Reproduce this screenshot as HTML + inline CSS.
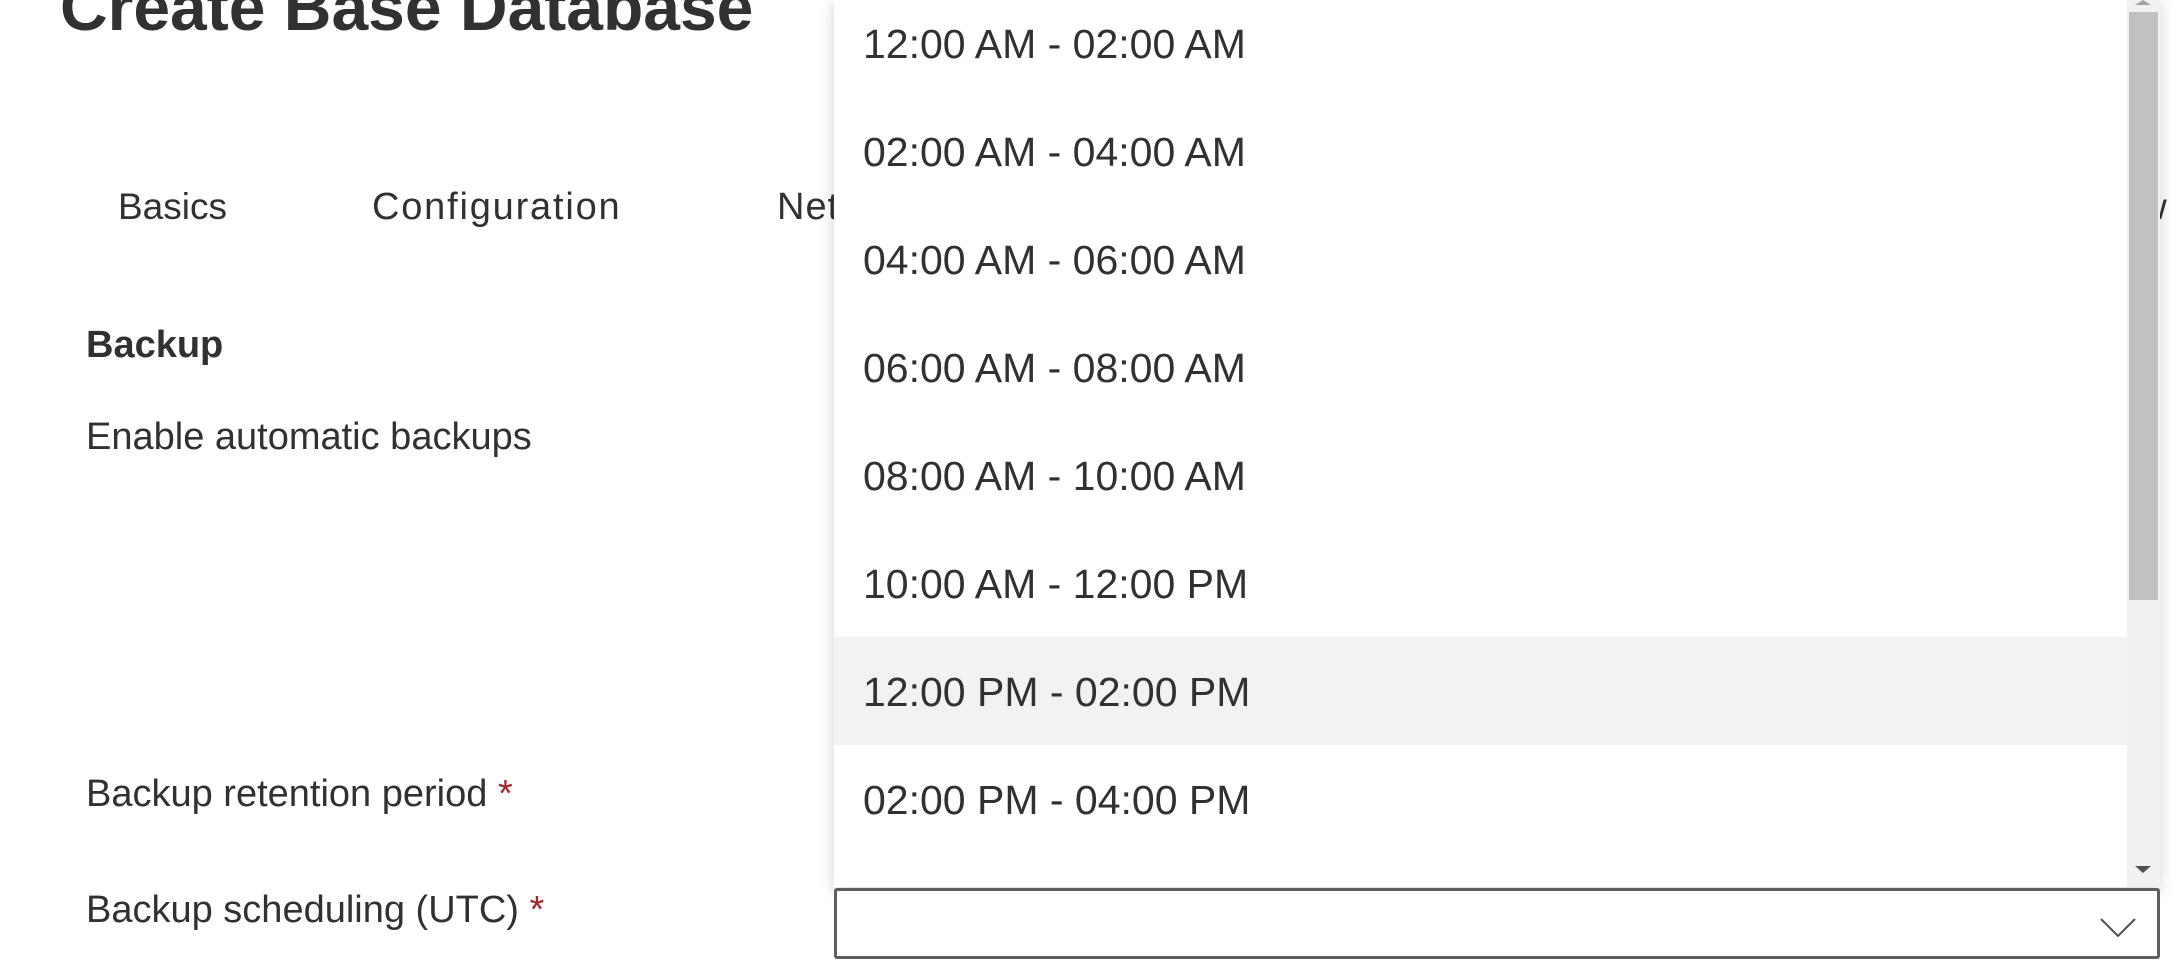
<!DOCTYPE html>
<html><head><style>
body{margin:0;width:2180px;height:979px;overflow:hidden;background:#fff;font-family:"Liberation Sans",sans-serif;color:#323130;position:relative}
.t{position:absolute;white-space:nowrap;line-height:1}
.item{position:absolute;left:834px;width:1293px;height:108px}
.item span{position:absolute;left:29px;top:32px;font-size:41px}
.star{color:#a4262c}
</style></head><body>
<div class="t" style="left:60px;top:-26px;font-size:66px;font-weight:bold">Create Base Database</div>
<div class="t" style="left:118px;top:188px;font-size:37px">Basics</div>
<div class="t" style="left:372px;top:188px;font-size:38px;letter-spacing:1.8px">Configuration</div>
<div class="t" style="left:777px;top:188px;font-size:38px;letter-spacing:1px">Networking</div>
<div class="t" style="left:2140px;top:188px;font-size:37px">w</div>
<div class="t" style="left:86px;top:326px;font-size:38px;font-weight:bold">Backup</div>
<div class="t" style="left:86px;top:418px;font-size:38px">Enable automatic backups</div>
<div class="t" style="left:86px;top:775px;font-size:38px">Backup retention period <span class="star">*</span></div>
<div class="t" style="left:86px;top:891px;font-size:38px">Backup scheduling (UTC) <span class="star">*</span></div>

<div style="position:absolute;left:834px;top:0;width:1326px;height:887px;background:#fff;box-shadow:0 4px 14px rgba(0,0,0,0.18)"></div>
<div class="item" style="top:-11px"><span>12:00 AM - 02:00 AM</span></div>
<div class="item" style="top:97px"><span>02:00 AM - 04:00 AM</span></div>
<div class="item" style="top:205px"><span>04:00 AM - 06:00 AM</span></div>
<div class="item" style="top:313px"><span>06:00 AM - 08:00 AM</span></div>
<div class="item" style="top:421px"><span>08:00 AM - 10:00 AM</span></div>
<div class="item" style="top:529px"><span>10:00 AM - 12:00 PM</span></div>
<div class="item" style="top:637px;background:#f3f2f1"><span>12:00 PM - 02:00 PM</span></div>
<div class="item" style="top:745px"><span>02:00 PM - 04:00 PM</span></div>
<div style="position:absolute;left:2127px;top:0;width:33px;height:887px;background:#f1f1f1"></div>
<div style="position:absolute;left:2129px;top:12px;width:29px;height:588px;background:#c1c1c1"></div>
<div style="position:absolute;left:2135px;top:0;width:0;height:0;border-left:8px solid transparent;border-right:8px solid transparent;border-bottom:5px solid #a3a3a3"></div>
<div style="position:absolute;left:2135px;top:866px;width:0;height:0;border-left:8px solid transparent;border-right:8px solid transparent;border-top:7px solid #505050"></div>
<div style="position:absolute;left:834px;top:888px;width:1320px;height:65px;border:3px solid #605e5c;border-radius:3px;background:#fff"></div>
<svg style="position:absolute;left:2098px;top:915px" width="40" height="24"><path d="M3 4 L20 21 L37 4" fill="none" stroke="#505050" stroke-width="2"/></svg>
</body></html>
